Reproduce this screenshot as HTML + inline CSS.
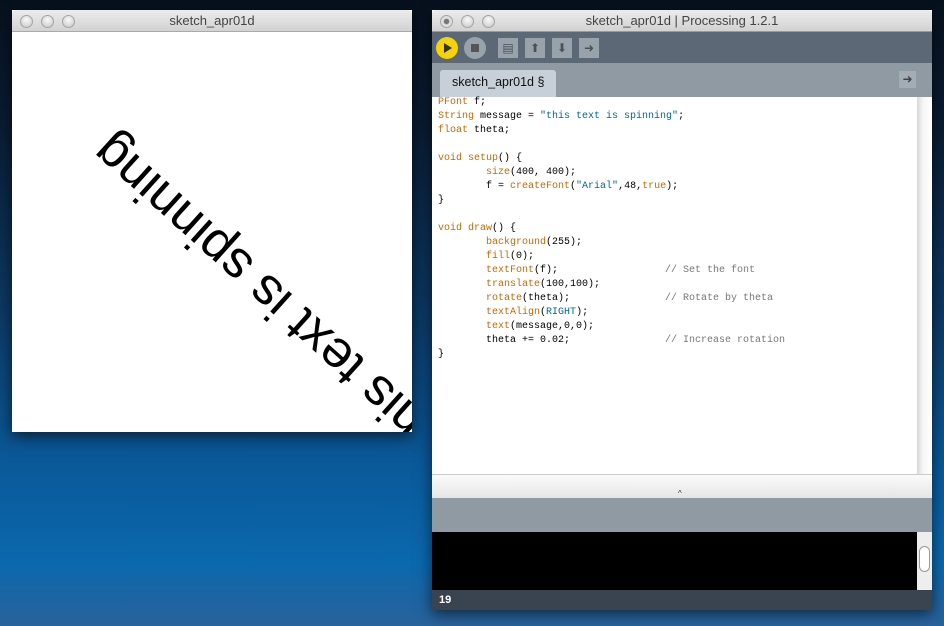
<!DOCTYPE html>
<html><head><meta charset="utf-8"><style>
*{margin:0;padding:0;box-sizing:border-box}
body{width:944px;height:626px;overflow:hidden;position:relative;font-family:"Liberation Sans",sans-serif;
background:linear-gradient(180deg,#07111e 0%,#0a1c33 20%,#0c3a66 50%,#0a5a9a 75%,#0b68ad 90%,#2a629a 100%)}
.win{position:absolute;box-shadow:0 4px 14px rgba(0,0,0,.6)}
.tb{position:absolute;left:0;right:0;top:0;height:22px;background:linear-gradient(#ececec,#d2d2d2);border-bottom:1px solid #9a9a9a;border-radius:4px 4px 0 0;text-align:center;font-size:13px;line-height:22px;color:#444}
.dot{position:absolute;top:5px;width:13px;height:13px;border-radius:50%;background:radial-gradient(circle at 50% 35%,#fafafa,#c4c4c4);border:1px solid #a4a4a4}
.code{position:absolute;font-family:"Liberation Mono",monospace;font-size:10px;line-height:14px;white-space:pre;color:#000}
.k{color:#cc6600}.s{color:#006699}.c{color:#777}
.btn{position:absolute;width:20px;height:20px;background:#98a2ab;color:#4a5058;font-size:12px;text-align:center;line-height:20px}
</style></head><body>
<div class="win" style="left:12px;top:10px;width:400px;height:422px;background:#fff">
 <div class="tb" style="border-bottom-color:#aaa">sketch_apr01d
  <div class="dot" style="left:8px"></div><div class="dot" style="left:29px"></div><div class="dot" style="left:50px"></div></div>
 <svg style="position:absolute;left:0;top:22px" width="400" height="400">
  <text x="100" y="100" text-anchor="end" font-family="Liberation Sans, sans-serif" font-size="52" transform="rotate(222 100 100)" fill="#000">this text is spinning</text>
 </svg>
</div>
<div class="win" style="left:432px;top:10px;width:500px;height:600px;background:#fff">
 <div class="tb">sketch_apr01d | Processing 1.2.1
  <div class="dot" style="left:8px;background:radial-gradient(circle,#777 30%,#ddd 40%)"></div><div class="dot" style="left:29px"></div><div class="dot" style="left:50px"></div></div>
 <div style="position:absolute;left:0;top:22px;width:500px;height:31px;background:#5c6875"></div>
 <div style="position:absolute;left:4px;top:27px;width:22px;height:22px;border-radius:50%;background:#f5d20a"><div style="position:absolute;left:8px;top:6px;border-left:8px solid #333;border-top:5px solid transparent;border-bottom:5px solid transparent"></div></div>
 <div style="position:absolute;left:32px;top:27px;width:22px;height:22px;border-radius:50%;background:#98a2ab"><div style="position:absolute;left:7px;top:7px;width:8px;height:8px;background:#555"></div></div>
 <div class="btn" style="left:66px;top:28px">▤</div><div class="btn" style="left:93px;top:28px">⬆</div><div class="btn" style="left:120px;top:28px">⬇</div><div class="btn" style="left:147px;top:28px">➜</div>
 <div style="position:absolute;left:0;top:53px;width:500px;height:34px;background:#8f9aa3"></div>
 <div style="position:absolute;left:8px;top:60px;width:116px;height:27px;background:#c7d0d8;border-radius:3px 3px 0 0;font-size:12.5px;line-height:24px;padding-left:12px;color:#111;white-space:nowrap">sketch_apr01d §</div>
 <div style="position:absolute;left:467px;top:61px;width:17px;height:17px;background:#a3adb6;color:#444;font-size:12px;text-align:center;line-height:17px">➜</div>
 <div style="position:absolute;left:485px;top:87px;width:15px;height:377px;background:linear-gradient(90deg,#d8d8d8,#f6f6f6 40%,#fff)"></div>
 <div class="code" style="left:6px;top:86px"><span class="k">PFont</span> f;
<span class="k">String</span> message = <span class="s">"this text is spinning"</span>;
<span class="k">float</span> theta;

<span class="k">void</span> <span class="k">setup</span>() {
        <span class="k">size</span>(400, 400);
        f = <span class="k">createFont</span>(<span class="s">"Arial"</span>,48,<span class="k">true</span>);
}

<span class="k">void</span> <span class="k">draw</span>() {
        <span class="k">background</span>(255);
        <span class="k">fill</span>(0);
        <span class="k">textFont</span>(f);
        <span class="k">translate</span>(100,100);
        <span class="k">rotate</span>(theta);
        <span class="k">textAlign</span>(<span class="s">RIGHT</span>);
        <span class="k">text</span>(message,0,0);
        theta += 0.02;
}</div>
 <div class="code c" style="left:233px;top:254px">// Set the font</div>
 <div class="code c" style="left:233px;top:282px">// Rotate by theta</div>
 <div class="code c" style="left:233px;top:324px">// Increase rotation</div>
 <div style="position:absolute;left:0;top:464px;width:500px;height:24px;background:linear-gradient(#fafafa,#e6e6e6);border-top:1px solid #ccc"><div style="position:absolute;left:246px;top:14px;font-size:8px;color:#333">^</div></div>
 <div style="position:absolute;left:0;top:488px;width:500px;height:34px;background:#8f9aa3"></div>
 <div style="position:absolute;left:0;top:522px;width:485px;height:58px;background:#000"></div>
 <div style="position:absolute;left:485px;top:522px;width:15px;height:58px;background:#eee"><div style="position:absolute;left:2px;top:14px;width:11px;height:26px;border:1px solid #999;border-radius:6px;background:#fff"></div></div>
 <div style="position:absolute;left:0;top:580px;width:500px;height:20px;background:#3a4450;color:#fff;font-size:11px;font-weight:bold;line-height:20px;padding-left:7px">19</div>
</div>
</body></html>
